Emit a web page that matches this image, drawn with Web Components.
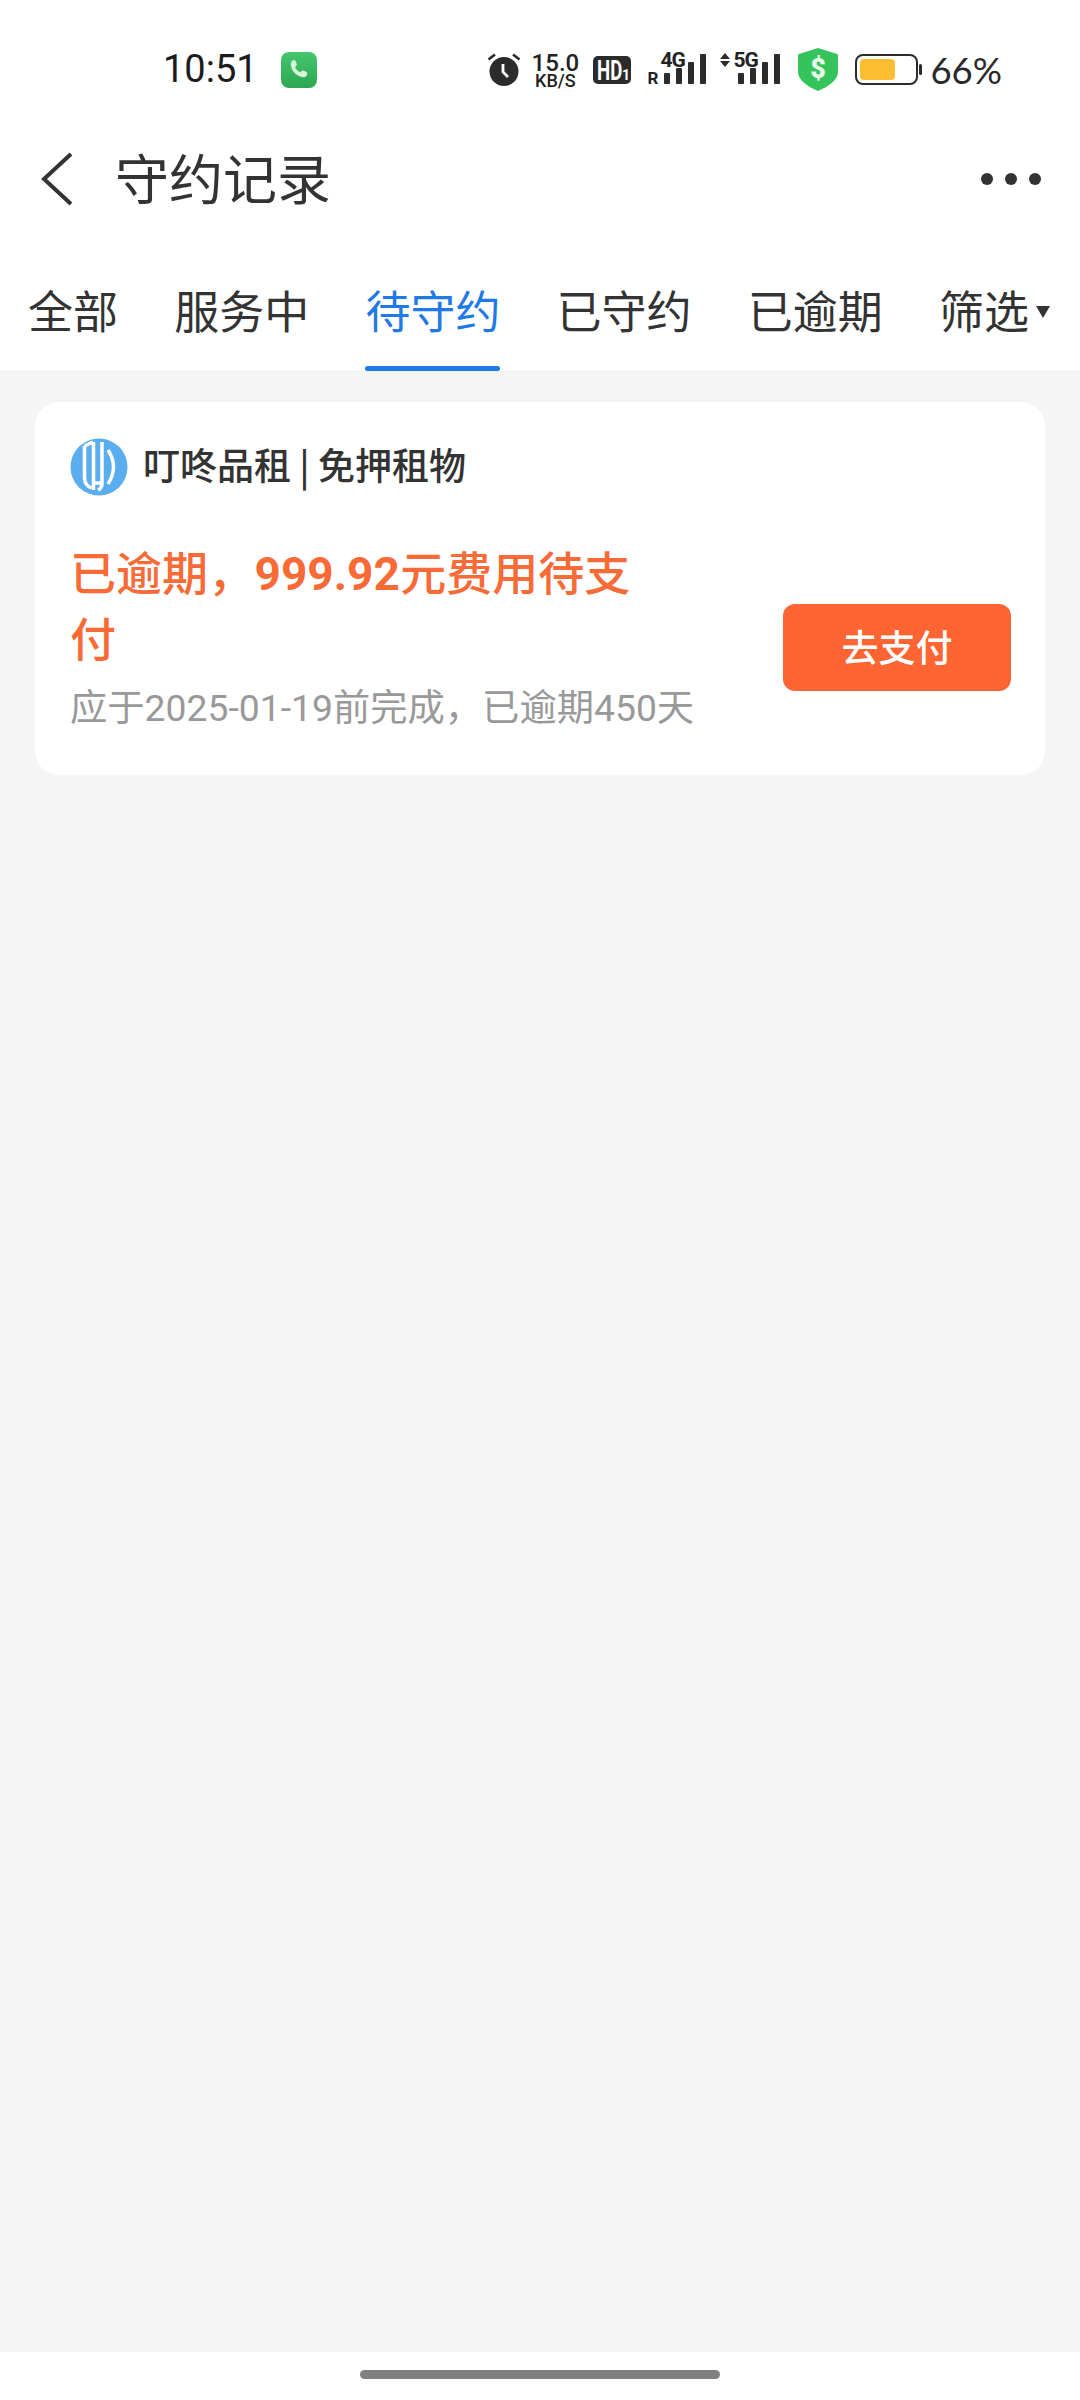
<!DOCTYPE html>
<html lang="zh-CN">

<head>
    <meta charset="UTF-8">
    <title>守约记录</title>
    <style>
        html, body { margin: 0; padding: 0; }
        body {
            width: 1080px;
            height: 2400px;
            display: flex;
            flex-direction: column;
            background: #f5f5f5;
            font-family: Roboto, "Noto Sans CJK SC", sans-serif;
            overflow: hidden;
        }
        main { flex: 1; padding: 30px 35px 0; }
        b { margin: 0 .5px; }
    </style>
</head>

<body>
    <status-bar></status-bar>
    <app-header>守约记录</app-header>
    <tab-bar>
        <tab-item>全部</tab-item>
        <tab-item>服务中</tab-item>
        <tab-item active>待守约</tab-item>
        <tab-item>已守约</tab-item>
        <tab-item>已逾期</tab-item>
        <tab-item filter>筛选</tab-item>
    </tab-bar>
    <main>
        <record-card merchant="叮咚品租 | 免押租物" action="去支付">
            <span slot="title">已逾期，<b>999.92</b>元费用待支<br>付</span>
            <span slot="sub">应于2025-01-19前完成，已逾期450天</span>
        </record-card>
    </main>
    <home-bar></home-bar>

    <script>
        // Status bar: time + notification on the left, system icons on the right
        customElements.define('status-bar', class extends HTMLElement {
            constructor() {
                super();
                const shadowRoot = this.attachShadow({mode: 'open'});
                shadowRoot.innerHTML = `
                    <style>
                        :host {
                            display: flex;
                            align-items: center;
                            height: 92px;
                            padding: 46px 78px 0 163px;
                            box-sizing: border-box;
                            background: #fff;
                            color: #222;
                            font-family: Roboto, sans-serif;
                        }
                        svg { display: block; flex: none; }
                        .time { font-size: 38px; line-height: 40px; color: #1c1c1c; margin-top: -1px; }
                        .phone { margin-left: 23px; margin-top: 1px; }
                        .right { margin-left: auto; display: flex; align-items: center; }
                        .speed {
                            margin-left: 11px; width: 46px; display: flex; flex-direction: column;
                            align-items: center; margin-top: 3px;
                        }
                        .speed b { font-size: 24px; line-height: 20px; font-weight: 500; }
                        .speed i { font-style: normal; font-size: 18px; line-height: 15px; font-weight: 500; }
                        .hd { margin-left: 15px; margin-top: 1px; overflow: visible; }
                        .sig { margin-left: 16px; margin-top: -6px; position: relative; }
                        .sig2 { margin-left: 11px; margin-top: -6px; position: relative; }
                        .sig span, .sig2 span {
                            position: absolute; font-weight: 700; font-family: Roboto, sans-serif;
                        }
                        .shield { margin-left: 18px; }
                        .batt { margin-left: 17px; }
                        .pct {
                            margin-left: 7px; font-family: Lato, sans-serif; font-size: 36.500px;
                            line-height: 40px; color: #2a2a2a; margin-top: 1px;
                        }
                    </style>
                    <div class="time">10:51</div>
                    <svg class="phone" width="36" height="36" viewBox="0 0 36 36">
                        <defs>
                            <linearGradient id="pg" x1="0" y1="0" x2="0" y2="1">
                                <stop offset="0" stop-color="#45c56e"/>
                                <stop offset="1" stop-color="#2ba850"/>
                            </linearGradient>
                        </defs>
                        <rect width="36" height="36" rx="8" fill="url(#pg)"/>
                        <path d="M11 8.500c1.500-1 3-.5 3.600.8l1 2.200c.4.900.2 1.700-.5 2.400l-1 1c.9 2.300 2.800 4.200 5.200 5.300l1-1c.7-.7 1.600-.9 2.500-.5l2.200 1c1.300.6 1.800 2.100.9 3.500-.9 1.400-2.300 2.300-4.100 2-6.300-1-11.300-6.200-12-12.400-.2-1.900.8-3.400 1.700-4.300z" fill="#d6f3dc"/>
                    </svg>
                    <div class="right">
                        <svg width="34" height="34" viewBox="0 0 34 34">
                            <circle cx="17" cy="19.500" r="14.500" fill="#2b2b2b"/>
                            <path d="M1.500 7.500 8 2.500M32.500 7.500 26 2.500" stroke="#2b2b2b" stroke-width="2.600" fill="none"/>
                            <path d="M16 12v8l5 5" stroke="#fff" stroke-width="2.800" fill="none"/>
                        </svg>
                        <div class="speed"><b>15.0</b><i>KB/S</i></div>
                        <svg class="hd" width="38" height="28" viewBox="0 0 38 28">
                            <rect width="38" height="28" rx="5" fill="#2b2b2b"/>
                            <text transform="translate(4 24) scale(.69 1)" font-family="Roboto, sans-serif" font-weight="700" font-size="27" fill="#fff">HD</text>
                            <text x="29" y="24" font-family="Roboto, sans-serif" font-weight="700" font-size="14" fill="#fff">1</text>
                        </svg>
                        <div class="sig" style="width:62px;height:36px">
                            <span style="left:0;top:22px;font-size:17px;line-height:17px">R</span>
                            <span style="left:13px;top:2px;font-size:21px;line-height:21px;letter-spacing:-1px">4G</span>
                            <svg width="62" height="36" viewBox="0 0 62 36">
                                <g fill="#2b2b2b">
                                    <rect x="17" y="25" width="6" height="11" rx="1"/>
                                    <rect x="29" y="20" width="6" height="16" rx="1"/>
                                    <rect x="41" y="14" width="6" height="22" rx="1"/>
                                    <rect x="53" y="6" width="6" height="30" rx="1"/>
                                </g>
                            </svg>
                        </div>
                        <div class="sig2" style="width:60px;height:36px">
                            <span style="left:13px;top:2px;font-size:21px;line-height:21px;letter-spacing:-1px">5G</span>
                            <svg width="60" height="36" viewBox="0 0 60 36">
                                <path d="M0 11 5 5l5 6zM0 13h10l-5 6z" fill="#2b2b2b"/>
                                <g fill="#2b2b2b">
                                    <rect x="18" y="25" width="6" height="11" rx="1"/>
                                    <rect x="30" y="20" width="6" height="16" rx="1"/>
                                    <rect x="42" y="14" width="6" height="22" rx="1"/>
                                    <rect x="54" y="6" width="6" height="30" rx="1"/>
                                </g>
                            </svg>
                        </div>
                        <svg class="shield" width="40" height="43" viewBox="0 0 40 43">
                            <path d="M20 0 39 6c1 .3 1 .8 1 1.500V24c0 8-10 15-20 19C10 39 0 32 0 24V7.500c0-.7 0-1.200 1-1.500z" fill="#35c45c"/>
                            <text x="20" y="30" text-anchor="middle" font-family="Roboto, sans-serif" font-weight="900" font-size="27" fill="#e6f8ea">$</text>
                        </svg>
                        <svg class="batt" width="68" height="31" viewBox="0 0 68 31">
                            <rect x="1" y="1" width="61" height="29" rx="7" fill="#fff" stroke="#2b2b2b" stroke-width="2"/>
                            <rect x="5" y="5" width="35" height="21" rx="4" fill="#fcbd33"/>
                            <rect x="64" y="10" width="3" height="11" rx="1.500" fill="#2b2b2b"/>
                        </svg>
                        <div class="pct">66%</div>
                    </div>
                `;
            }
        });

        customElements.define('app-header', class extends HTMLElement {
            constructor() {
                super();
                const shadowRoot = this.attachShadow({mode: 'open'});
                shadowRoot.innerHTML = `
                    <style>
                        :host {
                            display: flex;
                            align-items: center;
                            height: 174px;
                            padding: 0 39px 0 41px;
                            box-sizing: border-box;
                            background: #fff;
                            color: #333;
                        }
                        svg { display: block; flex: none; }
                        .title {
                            margin-left: 42px;
                            padding-bottom: 4px;
                            font-size: 54px;
                            line-height: 70px;
                            font-family: "Noto Sans CJK SC", sans-serif;
                        }
                        .more { margin-left: auto; }
                    </style>
                    <svg width="32" height="54" viewBox="0 0 32 54">
                        <path d="M30 2 3 27l27 25" fill="none" stroke="#333" stroke-width="4"/>
                    </svg>
                    <div class="title"><slot></slot></div>
                    <svg class="more" width="60" height="12" viewBox="0 0 60 12">
                        <circle cx="6" cy="6" r="6" fill="#333"/>
                        <circle cx="30" cy="6" r="6" fill="#333"/>
                        <circle cx="54" cy="6" r="6" fill="#333"/>
                    </svg>
                `;
            }
        });

        customElements.define('tab-bar', class extends HTMLElement {
            constructor() {
                super();
                const shadowRoot = this.attachShadow({mode: 'open'});
                shadowRoot.innerHTML = `
                    <style>
                        :host {
                            display: flex;
                            gap: 56.200px;
                            height: 106px;
                            padding-left: 28px;
                            box-sizing: border-box;
                            background: #fff;
                            border-bottom: 1px solid #eeeeee;
                            overflow: hidden;
                        }
                    </style>
                    <slot></slot>
                `;
            }
        });

        customElements.define('tab-item', class extends HTMLElement {
            constructor() {
                super();
                const shadowRoot = this.attachShadow({mode: 'open'});
                shadowRoot.innerHTML = `
                    <style>
                        :host {
                            display: flex;
                            position: relative;
                            flex: none;
                            height: 105px;
                            padding-top: 12px;
                            box-sizing: border-box;
                            font-size: 45px;
                            line-height: 64px;
                            color: #333;
                            font-family: "Noto Sans CJK SC", sans-serif;
                        }
                        :host([active]) { color: #1f7ae8; }
                        :host([active])::after {
                            content: "";
                            position: absolute;
                            left: 0;
                            right: 0;
                            bottom: 0;
                            height: 5px;
                            border-radius: 3px;
                            background: #1f7ae8;
                        }
                        .arrow { display: none; margin: 28px 0 0 7px; }
                        :host([filter]) .arrow { display: block; }
                    </style>
                    <slot></slot>
                    <svg class="arrow" width="14" height="12" viewBox="0 0 14 12"><path d="M0 0h14L7 12z" fill="#333"/></svg>
                `;
            }
        });

        customElements.define('record-card', class extends HTMLElement {
            constructor() {
                super();
                const shadowRoot = this.attachShadow({mode: 'open'});
                shadowRoot.innerHTML = `
                    <style>
                        :host {
                            display: block;
                            height: 373px;
                            padding: 36px 34px 0 35px;
                            box-sizing: border-box;
                            background: #fff;
                            border-radius: 24px;
                        }
                        .head { display: flex; align-items: center; height: 58px; }
                        .logo { display: block; flex: none; }
                        .merchant {
                            margin-left: 15px;
                            padding-bottom: 7px;
                            font-size: 37px;
                            line-height: 50px;
                            font-weight: 500;
                            color: #333;
                            font-family: "Noto Sans CJK SC", sans-serif;
                        }
                        .body { display: flex; align-items: flex-start; margin-top: 45px; }
                        .text { flex: 1; min-width: 0; }
                        .title {
                            width: 585px;
                            font-size: 46px;
                            line-height: 66px;
                            font-weight: 500;
                            color: #f86a36;
                        }
                        .sub {
                            margin-top: 10px;
                            font-size: 37.300px;
                            line-height: 50px;
                            color: #999;
                            white-space: nowrap;
                        }
                        .btn {
                            flex: none;
                            width: 228px;
                            height: 87px;
                            padding-bottom: 3px;
                            box-sizing: border-box;
                            margin-top: 63px;
                            border-radius: 12px;
                            background: #ff6433;
                            color: #fff;
                            display: flex;
                            align-items: center;
                            justify-content: center;
                            font-size: 37px;
                            font-weight: 500;
                            font-family: "Noto Sans CJK SC", sans-serif;
                        }
                    </style>
                    <div class="head">
                        <svg class="logo" width="58" height="58" viewBox="0 0 58 58">
                            <circle cx="29" cy="29" r="28.500" fill="#5aaeef"/>
                            <g fill="none" stroke="#fff" stroke-width="3.500">
                                <path d="M14.500 8V40q0 7 7 10"/>
                                <path d="M14.500 8 23 4"/>
                                <path d="M23.500 4V52"/>
                                <path d="M23.500 45H31"/>
                                <path d="M32 4V46q0 4-4 6"/>
                                <path d="M38 12q11 17 0 34"/>
                            </g>
                        </svg>
                        <div class="merchant">${this.getAttribute('merchant')}</div>
                    </div>
                    <div class="body">
                        <div class="text">
                            <div class="title"><slot name="title"></slot></div>
                            <div class="sub"><slot name="sub"></slot></div>
                        </div>
                        <div class="btn">${this.getAttribute('action')}</div>
                    </div>
                `;
            }
        });

        customElements.define('home-bar', class extends HTMLElement {
            constructor() {
                super();
                const shadowRoot = this.attachShadow({mode: 'open'});
                shadowRoot.innerHTML = `
                    <style>
                        :host {
                            display: flex;
                            justify-content: center;
                            height: 48px;
                            padding-top: 18px;
                            box-sizing: border-box;
                            background: #fff;
                        }
                        div { width: 360px; height: 9px; border-radius: 5px; background: #808080; }
                    </style>
                    <div></div>
                `;
            }
        });
    </script>
</body>

</html>
